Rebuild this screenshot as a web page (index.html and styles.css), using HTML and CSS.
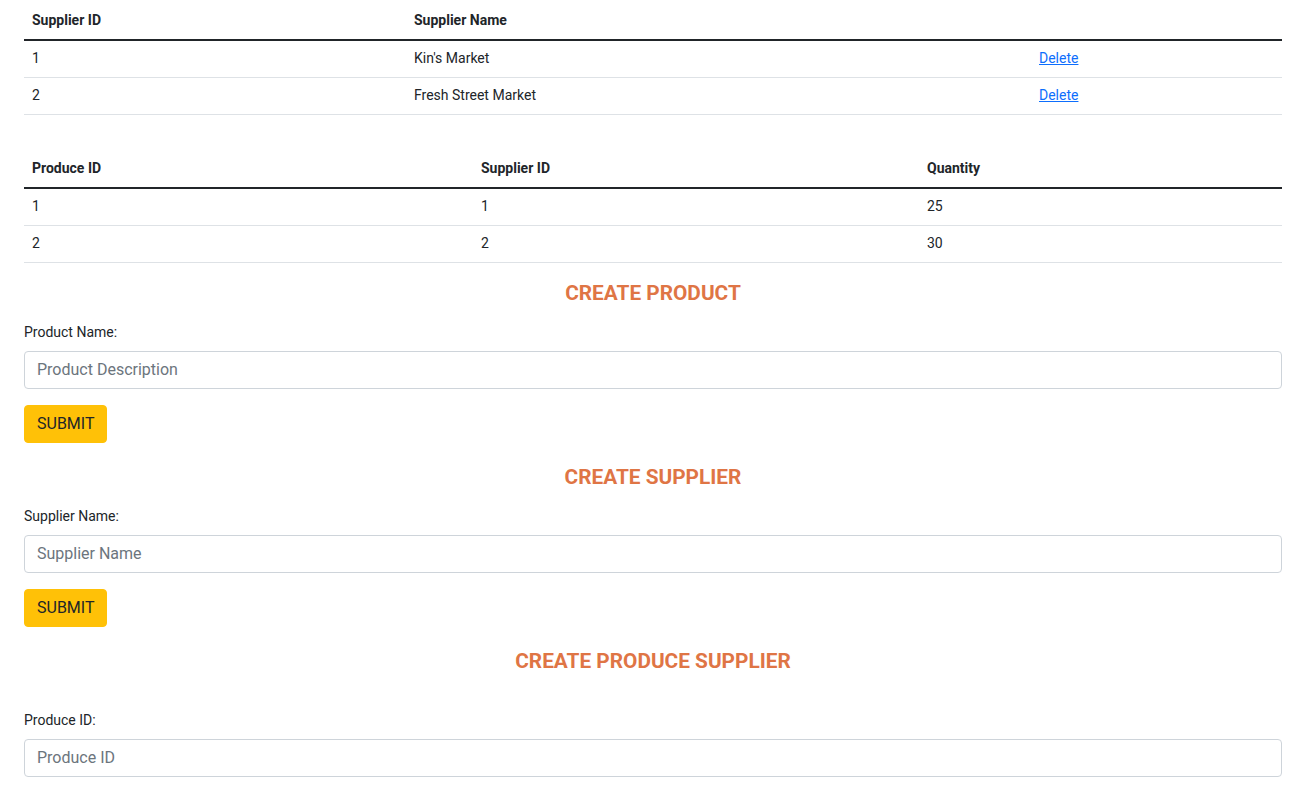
FILE: index.html
```html
<!DOCTYPE html>
<html lang="en">
<head>
<meta charset="utf-8">
<title>Produce Suppliers</title>
<link rel="stylesheet" href="styles.css">
</head>
<body>
<main class="page">
  <table class="data-table suppliers">
    <thead>
      <tr><th class="c1">Supplier ID</th><th class="c2">Supplier Name</th><th class="c3"></th></tr>
    </thead>
    <tbody>
      <tr><td>1</td><td>Kin's Market</td><td><a href="#" class="link">Delete</a></td></tr>
      <tr><td>2</td><td>Fresh Street Market</td><td><a href="#" class="link">Delete</a></td></tr>
    </tbody>
  </table>

  <table class="data-table produce">
    <thead>
      <tr><th class="c1">Produce ID</th><th class="c2">Supplier ID</th><th class="c3">Quantity</th></tr>
    </thead>
    <tbody>
      <tr><td>1</td><td>1</td><td>25</td></tr>
      <tr><td>2</td><td>2</td><td>30</td></tr>
    </tbody>
  </table>

  <section class="form-section">
    <h3 class="section-title">CREATE PRODUCT</h3>
    <label class="field-label" for="pname">Product Name:</label>
    <input class="field-input" id="pname" type="text" placeholder="Product Description">
    <button class="btn-submit" type="button">SUBMIT</button>
  </section>

  <section class="form-section">
    <h3 class="section-title">CREATE SUPPLIER</h3>
    <label class="field-label" for="sname">Supplier Name:</label>
    <input class="field-input" id="sname" type="text" placeholder="Supplier Name">
    <button class="btn-submit" type="button">SUBMIT</button>
  </section>

  <section class="form-section">
    <h3 class="section-title">CREATE PRODUCE SUPPLIER</h3>
    <div class="spacer"></div>
    <label class="field-label" for="pid">Produce ID:</label>
    <input class="field-input" id="pid" type="text" placeholder="Produce ID">
  </section>
</main>
</body>
</html>
```

FILE: styles.css
```css
* { box-sizing: border-box; }

html, body {
  margin: 0;
  padding: 0;
  background: #ffffff;
}

body {
  font-family: Roboto, "Liberation Sans", Arial, sans-serif;
  color: #212529;
  font-size: 14px;
}

.page {
  padding: 2px 21px 0 24px;
  display: flex;
  flex-direction: column;
}

.data-table {
  width: 100%;
  border-collapse: collapse;
  font-size: 14px;
  line-height: 20px;
}

.data-table th,
.data-table td {
  padding: 8px 8px;
  text-align: left;
  vertical-align: top;
}

.data-table th {
  font-weight: 700;
  border-bottom: 2px solid #212529;
  padding-top: 8px;
  padding-bottom: 9px;
}

.data-table td {
  border-bottom: 1px solid #dee2e6;
  font-weight: 400;
  padding-top: 7px;
  padding-bottom: 9px;
}

.suppliers { margin-bottom: 35px; }
.suppliers .c1 { width: 382px; }
.suppliers .c2 { width: 625px; }

.produce { margin-bottom: 18px; }
.produce .c1 { width: 449px; }
.produce .c2 { width: 446px; }

.link {
  color: #0d6efd;
  text-decoration: underline;
}

.form-section {
  display: flex;
  flex-direction: column;
  align-items: stretch;
  margin-bottom: 22px;
}

.section-title {
  margin: 0 0 16px 0;
  text-align: center;
  color: #df7545;
  font-size: 20.8px;
  line-height: 25px;
  font-weight: 700;
}

.spacer { height: 20px; }

.field-label {
  font-size: 14px;
  line-height: 21px;
  margin-bottom: 8px;
  color: #212529;
}

.field-input {
  width: 100%;
  height: 38px;
  padding: 5px 12px 7px 12px;
  font-family: inherit;
  font-size: 16px;
  line-height: 24px;
  color: #212529;
  border: 1px solid #ced4da;
  border-radius: 4px;
  background: #fff;
  outline: none;
}

.field-input::placeholder {
  color: #6c757d;
  opacity: 1;
}

.btn-submit {
  align-self: flex-start;
  margin-top: 16px;
  height: 38px;
  padding: 0 12px 2px 12px;
  font-family: inherit;
  font-size: 16px;
  color: #212529;
  background: #ffc107;
  border: 1px solid #ffc107;
  border-radius: 4px;
  cursor: pointer;
}
```
